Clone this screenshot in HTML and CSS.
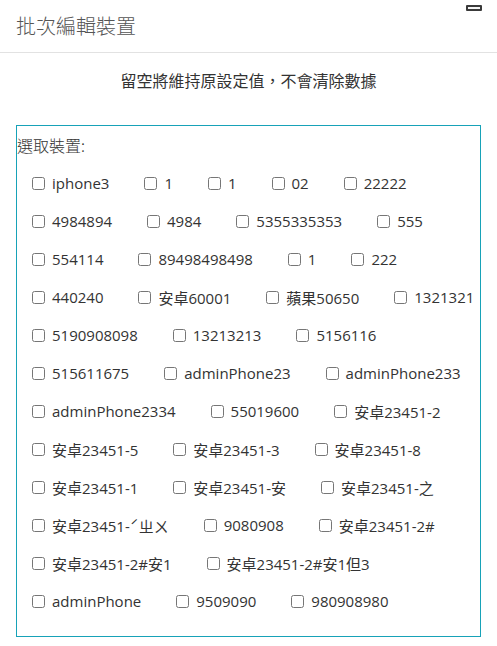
FILE: index.html
```html
<!DOCTYPE html>
<html lang="zh-Hant">
<head>
<meta charset="utf-8">
<title>批次編輯裝置</title>
<link rel="stylesheet" href="styles.css">
</head>
<body>
<div class="modal">
  <div class="modal-header">
    <h1 class="modal-title">批次編輯裝置</h1>
    <span class="minimize" aria-label="minimize"></span>
  </div>
  <p class="hint">留空將維持原設定值，不會清除數據</p>
  <fieldset class="device-box">
    <div class="box-label">選取裝置:</div>
    <div class="device-list">
      <label class="device"><input type="checkbox"><span>iphone3</span></label>
      <label class="device"><input type="checkbox"><span>1</span></label>
      <label class="device"><input type="checkbox"><span>1</span></label>
      <label class="device"><input type="checkbox"><span>02</span></label>
      <label class="device"><input type="checkbox"><span>22222</span></label>
      <label class="device"><input type="checkbox"><span>4984894</span></label>
      <label class="device"><input type="checkbox"><span>4984</span></label>
      <label class="device"><input type="checkbox"><span>5355335353</span></label>
      <label class="device"><input type="checkbox"><span>555</span></label>
      <label class="device"><input type="checkbox"><span>554114</span></label>
      <label class="device"><input type="checkbox"><span>89498498498</span></label>
      <label class="device"><input type="checkbox"><span>1</span></label>
      <label class="device"><input type="checkbox"><span>222</span></label>
      <label class="device"><input type="checkbox"><span>440240</span></label>
      <label class="device"><input type="checkbox"><span>安卓60001</span></label>
      <label class="device"><input type="checkbox"><span>蘋果50650</span></label>
      <label class="device"><input type="checkbox"><span>1321321</span></label>
      <label class="device"><input type="checkbox"><span>5190908098</span></label>
      <label class="device"><input type="checkbox"><span>13213213</span></label>
      <label class="device"><input type="checkbox"><span>5156116</span></label>
      <label class="device"><input type="checkbox"><span>515611675</span></label>
      <label class="device"><input type="checkbox"><span>adminPhone23</span></label>
      <label class="device"><input type="checkbox"><span>adminPhone233</span></label>
      <label class="device"><input type="checkbox"><span>adminPhone2334</span></label>
      <label class="device"><input type="checkbox"><span>55019600</span></label>
      <label class="device"><input type="checkbox"><span>安卓23451-2</span></label>
      <label class="device"><input type="checkbox"><span>安卓23451-5</span></label>
      <label class="device"><input type="checkbox"><span>安卓23451-3</span></label>
      <label class="device"><input type="checkbox"><span>安卓23451-8</span></label>
      <label class="device"><input type="checkbox"><span>安卓23451-1</span></label>
      <label class="device"><input type="checkbox"><span>安卓23451-安</span></label>
      <label class="device"><input type="checkbox"><span>安卓23451-之</span></label>
      <label class="device"><input type="checkbox"><span>安卓23451-ˊㄓㄨ</span></label>
      <label class="device"><input type="checkbox"><span>9080908</span></label>
      <label class="device"><input type="checkbox"><span>安卓23451-2#</span></label>
      <label class="device"><input type="checkbox"><span>安卓23451-2#安1</span></label>
      <label class="device"><input type="checkbox"><span>安卓23451-2#安1但3</span></label>
      <label class="device"><input type="checkbox"><span>adminPhone</span></label>
      <label class="device"><input type="checkbox"><span>9509090</span></label>
      <label class="device"><input type="checkbox"><span>980908980</span></label>
    </div>
  </fieldset>
</div>
</body>
</html>
```

FILE: styles.css
```css
* { box-sizing: border-box; }

html, body {
  margin: 0;
  padding: 0;
  background: #fff;
}

body {
  font-family: "Open Sans", "Noto Sans CJK TC", sans-serif;
  color: #333;
}

.modal {
  position: relative;
  width: 497px;
  min-height: 646px;
}

.modal-header {
  height: 53px;
  padding: 10px 16px;
  border-bottom: 1px solid #e2e2e2;
}

.modal-title {
  margin: 0;
  font-size: 20px;
  line-height: 32px;
  font-weight: 300;
  color: #555;
  font-family: "Noto Sans CJK TC", sans-serif;
}

.minimize {
  position: absolute;
  top: 5px;
  right: 15px;
  width: 16px;
  height: 6px;
  border: 2px solid #3a3a3a;
  background: #f4f4f4;
  border-radius: 1px;
}

.hint {
  margin: 15px 0 0;
  line-height: 24px;
  font-size: 16px;
  text-align: center;
  font-family: "Noto Sans CJK TC", sans-serif;
  color: #333;
}

.device-box {
  margin: 33px 16px 0;
  padding: 7px 0 16px;
  border: 1px solid #17a2b8;
  min-width: 0;
}

.box-label {
  font-size: 16px;
  line-height: 24px;
  font-weight: 300;
  font-family: "Noto Sans CJK TC", sans-serif;
  color: #333;
}

.device-list {
  margin-top: 7px;
  padding-left: 15px;
  display: flex;
  flex-wrap: wrap;
  column-gap: 35px;
}

.device {
  display: flex;
  align-items: center;
  height: 38px;
  font-size: 15px;
  color: #333;
  white-space: nowrap;
}

.device input {
  margin: 0 7px 0 0;
  width: 13px;
  height: 13px;
}
```
